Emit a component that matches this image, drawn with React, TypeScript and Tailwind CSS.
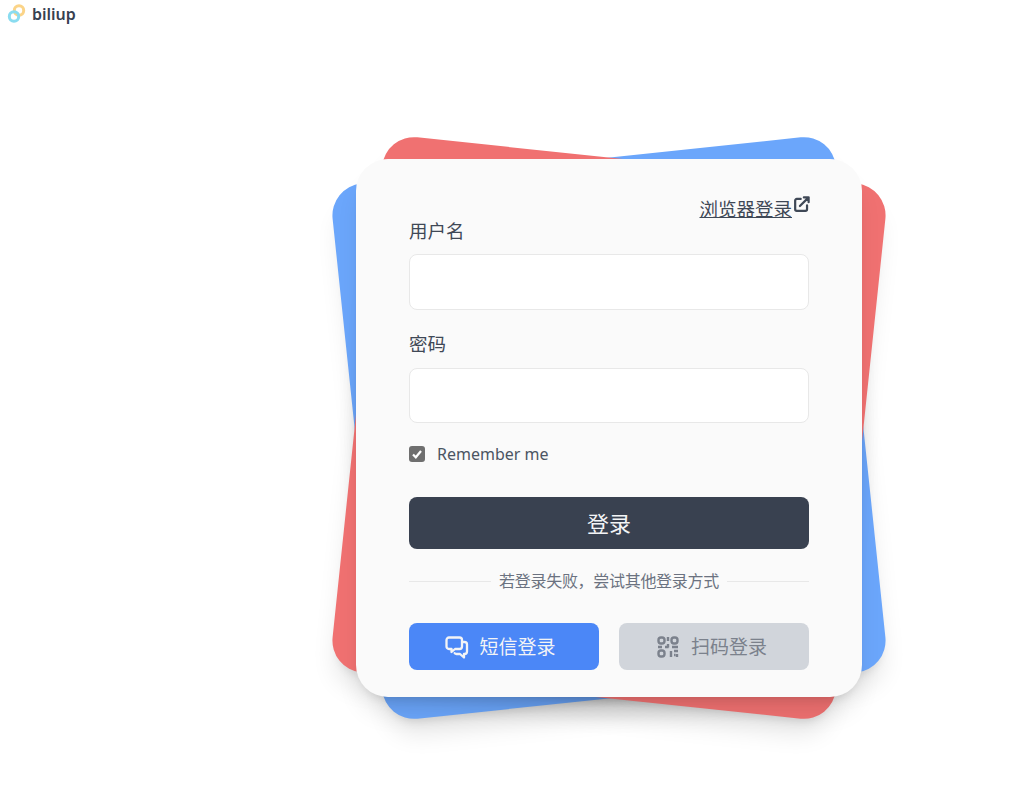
import React from "react";

const cjk = "font-['Noto_Sans','Noto_Sans_CJK_SC',sans-serif]";

function Logo() {
  return (
    <svg width="19" height="20" viewBox="0 0 19 20" fill="none">
      <circle cx="12" cy="6.500" r="4.700" stroke="#fbd488" strokeWidth="3" />
      <circle cx="7" cy="12.500" r="4.700" stroke="#8adcf0" strokeWidth="3" />
    </svg>
  );
}

function ChatIcon() {
  return (
    <svg width="24" height="24" viewBox="0 0 24 24" fill="none" stroke="currentColor" strokeWidth="2.300" strokeLinejoin="round" strokeLinecap="round">
      <path d="M4 2.500h10.500a2.500 2.500 0 0 1 2.500 2.500v6.500a2.500 2.500 0 0 1-2.500 2.500h-4.500l-3.500 3v-3h-2.500a2.500 2.500 0 0 1-2.500-2.500v-6.500a2.500 2.500 0 0 1 2.500-2.500z" />
      <path d="M17 7h2.500a2.500 2.500 0 0 1 2.500 2.500v7a2.500 2.500 0 0 1-2.500 2.500h-.5v3.500l-4-3.500h-3.500a2.500 2.500 0 0 1-1.800-.8" />
    </svg>
  );
}

function QrIcon() {
  return (
    <svg width="22" height="22" viewBox="0 0 22 22" fill="none" stroke="currentColor" strokeWidth="2.400">
      <rect x="1.500" y="1.500" width="6" height="6" rx="2.500" />
      <rect x="14.500" y="1.500" width="6" height="6" rx="2.500" />
      <rect x="1.500" y="14.500" width="6" height="6" rx="2.500" />
      <path d="M11 1v4M11 8v3.500M1 11h4M8 11h3.500M15 11h6M14 15v6M17 15h4M17 19h1.500M20 18v3" />
    </svg>
  );
}

export default function App() {
  return (
    <div className={`min-h-[790px] bg-white ${cjk} text-[#3f4856]`}>
      <header className="flex h-[28px] items-center gap-[6px] pl-[7px]">
        <Logo />
        <span className="text-[16px] font-semibold text-[#374151]">biliup</span>
      </header>
      <main className="ml-[194px] flex justify-center pt-[131px]">
        <div className="relative h-[538px] w-[506px]">
          <div className="absolute inset-0 -rotate-6 rounded-[32px] bg-[#6ba6fb] shadow-xl" />
          <div className="absolute inset-0 rotate-6 rounded-[32px] bg-[#f07171] shadow-xl" />
          <div className="relative flex h-full flex-col rounded-[32px] bg-[#fafafa] px-[53px] shadow-xl">
            <div className="flex h-[50px] items-start justify-end pt-[37px]">
              <a className="-mr-[2px] flex items-start text-[18.500px] leading-[26px] text-[#3f4856] underline">
                浏览器登录
                <svg className="-mt-[1px]" width="19" height="19" viewBox="0 0 24 24" fill="none" stroke="currentColor" strokeWidth="2.800" strokeLinecap="round" strokeLinejoin="round">
                  <path d="M11 5H6a2 2 0 0 0-2 2v11a2 2 0 0 0 2 2h11a2 2 0 0 0 2-2v-5" />
                  <path d="M15 3h6v6M21 3 10 14" />
                </svg>
              </a>
            </div>
            <label className="mt-[9px] h-[26px] text-[18.500px] leading-[26px]">用户名</label>
            <input className="mt-[10px] h-[56px] rounded-[8px] border border-[#e8e8e8] bg-white outline-none" />
            <label className="mt-[21px] h-[26px] text-[18.500px] leading-[26px]">密码</label>
            <input className="mt-[11px] h-[55px] rounded-[8px] border border-[#e8e8e8] bg-white outline-none" />
            <div className="mt-[23px] flex h-[16px] items-center gap-[12px]">
              <span className="flex h-[16px] w-[16px] items-center justify-center rounded-[3px] bg-[#6f6f6f]">
                <svg width="12" height="12" viewBox="0 0 12 12" fill="none" stroke="white" strokeWidth="2.200">
                  <path d="M2 6.500 4.800 9.300 10 3" />
                </svg>
              </span>
              <span className="text-[16px] text-[#4b5563]">Remember me</span>
            </div>
            <button className="mt-[35px] h-[52px] rounded-[8px] bg-[#394150] text-[22px] text-[#f3f4f6]">登录</button>
            <div className="mt-[22px] flex h-[20px] items-center gap-[8px]">
              <span className="h-px flex-1 bg-[#e8e8e8]" />
              <span className="text-[16px] leading-[20px] tracking-[-0.3px] text-[#6b7280]">若登录失败，尝试其他登录方式</span>
              <span className="h-px flex-1 bg-[#e8e8e8]" />
            </div>
            <div className="mt-[32px] flex justify-between">
              <button className="flex h-[47px] w-[190px] items-center justify-center gap-[10px] rounded-[8px] bg-[#4b87f7] pr-[7px] pt-[1px] text-[19px] text-[#f3f4f6]">
                <ChatIcon />
                短信登录
              </button>
              <button className="flex h-[47px] w-[190px] items-center justify-center gap-[12px] rounded-[8px] bg-[#d1d5db] pr-[4px] pt-[1px] text-[19px] text-[#7b818c]">
                <QrIcon />
                扫码登录
              </button>
            </div>
          </div>
        </div>
      </main>
    </div>
  );
}
